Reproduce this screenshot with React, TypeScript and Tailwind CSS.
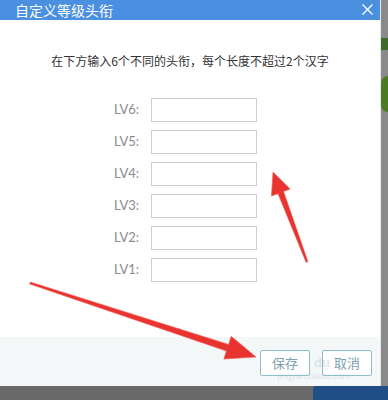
const LEVELS = ["LV6", "LV5", "LV4", "LV3", "LV2", "LV1"];

const cjk = "font-['Noto_Sans_CJK_SC','Noto_Sans',sans-serif]";

function Arrows() {
  return (
    <svg
      className="pointer-events-none absolute left-0 top-0"
      width={388}
      height={400}
      viewBox="0 0 388 400"
    >
      <g fill="#e8332f" stroke="#f0605a" strokeWidth={0.6} strokeLinejoin="round">
        <polygon points="273,172 290.2,189.1 283.6,191.5 307.9,261.6 306.1,262.4 278,193.7 271.4,196.1" />
        <polygon points="256,357 223.8,359.1 226.4,351 29.7,284 30.3,282 228.6,344.4 231.2,336.3" />
      </g>
    </svg>
  );
}

export default function App() {
  return (
    <div className={`relative flex h-[400px] w-[388px] flex-col overflow-hidden bg-[#8b8b8b] ${cjk}`}>
      <div className="flex h-[386px]">
        {/* dialog */}
        <div className="flex w-[381px] flex-col border-r border-[#e4e8ea] bg-white">
          <div className="flex h-[20px] items-center justify-between bg-[#4a8fe0] pl-[15px] pr-[7px]">
            <span className="text-[14px] leading-[20px] text-white">自定义等级头衔</span>
            <svg width={11} height={11} viewBox="0 0 11 11" className="-mt-[2px]">
              <path d="M0.5 0.5 L10.5 10.5 M10.5 0.5 L0.5 10.5" stroke="#fff" strokeWidth={1.3} />
            </svg>
          </div>

          <div className="flex flex-1 flex-col pt-[32px]">
            <p className="text-center text-[12px] leading-[18px] text-[#333]">
              在下方输入6个不同的头衔，每个长度不超过2个汉字
            </p>
            <div className="mt-[28px] flex flex-col gap-[8px] pl-[99px]">
              {LEVELS.map((lv) => (
                <div key={lv} className="flex items-center gap-[12px]">
                  <span className="w-[40px] text-right font-['Lato',sans-serif] text-[13px] text-[#8a8a8a]">
                    {lv}:
                  </span>
                  <div className="h-[24px] w-[106px] border border-[#cfcfcf] bg-white" />
                </div>
              ))}
            </div>
          </div>

          <div className="relative flex h-[49px] justify-end gap-[12px] bg-[#f3f7f8] pr-[8px] pt-[13px]">
            <button className="h-[26px] w-[50px] rounded-[2px] border border-[#8bbfcf] bg-white text-[13px] text-[#7e9fae]">
              保存
            </button>
            <button className="h-[26px] w-[50px] rounded-[2px] border border-[#8bbfcf] bg-white text-[13px] text-[#7e9fae]">
              取消
            </button>
            <span className="absolute right-[50px] top-[16px] font-['Liberation_Sans',sans-serif] text-[13px] font-bold text-[#9aa]/30">
              du
            </span>
            <span className="absolute right-[30px] top-[33px] font-['Liberation_Sans',sans-serif] text-[9px] text-[#aab]/30">
              jingyan.baidu.com
            </span>
          </div>
        </div>

        {/* page behind */}
        <div className="flex flex-1 flex-col bg-[#8a8a8a]">
          <div className="mt-[38px] h-[12px] bg-[#3f6b2a]" />
          <div className="mt-[26px] h-[36px] rounded-l-full bg-[#4d7a24]" />
        </div>
      </div>

      <div className="flex h-[14px] justify-end bg-[#6a6a6a]">
        <div className="w-[75px] rounded-tl-[3px] bg-[#1f4f86]" />
      </div>

      <Arrows />
    </div>
  );
}
